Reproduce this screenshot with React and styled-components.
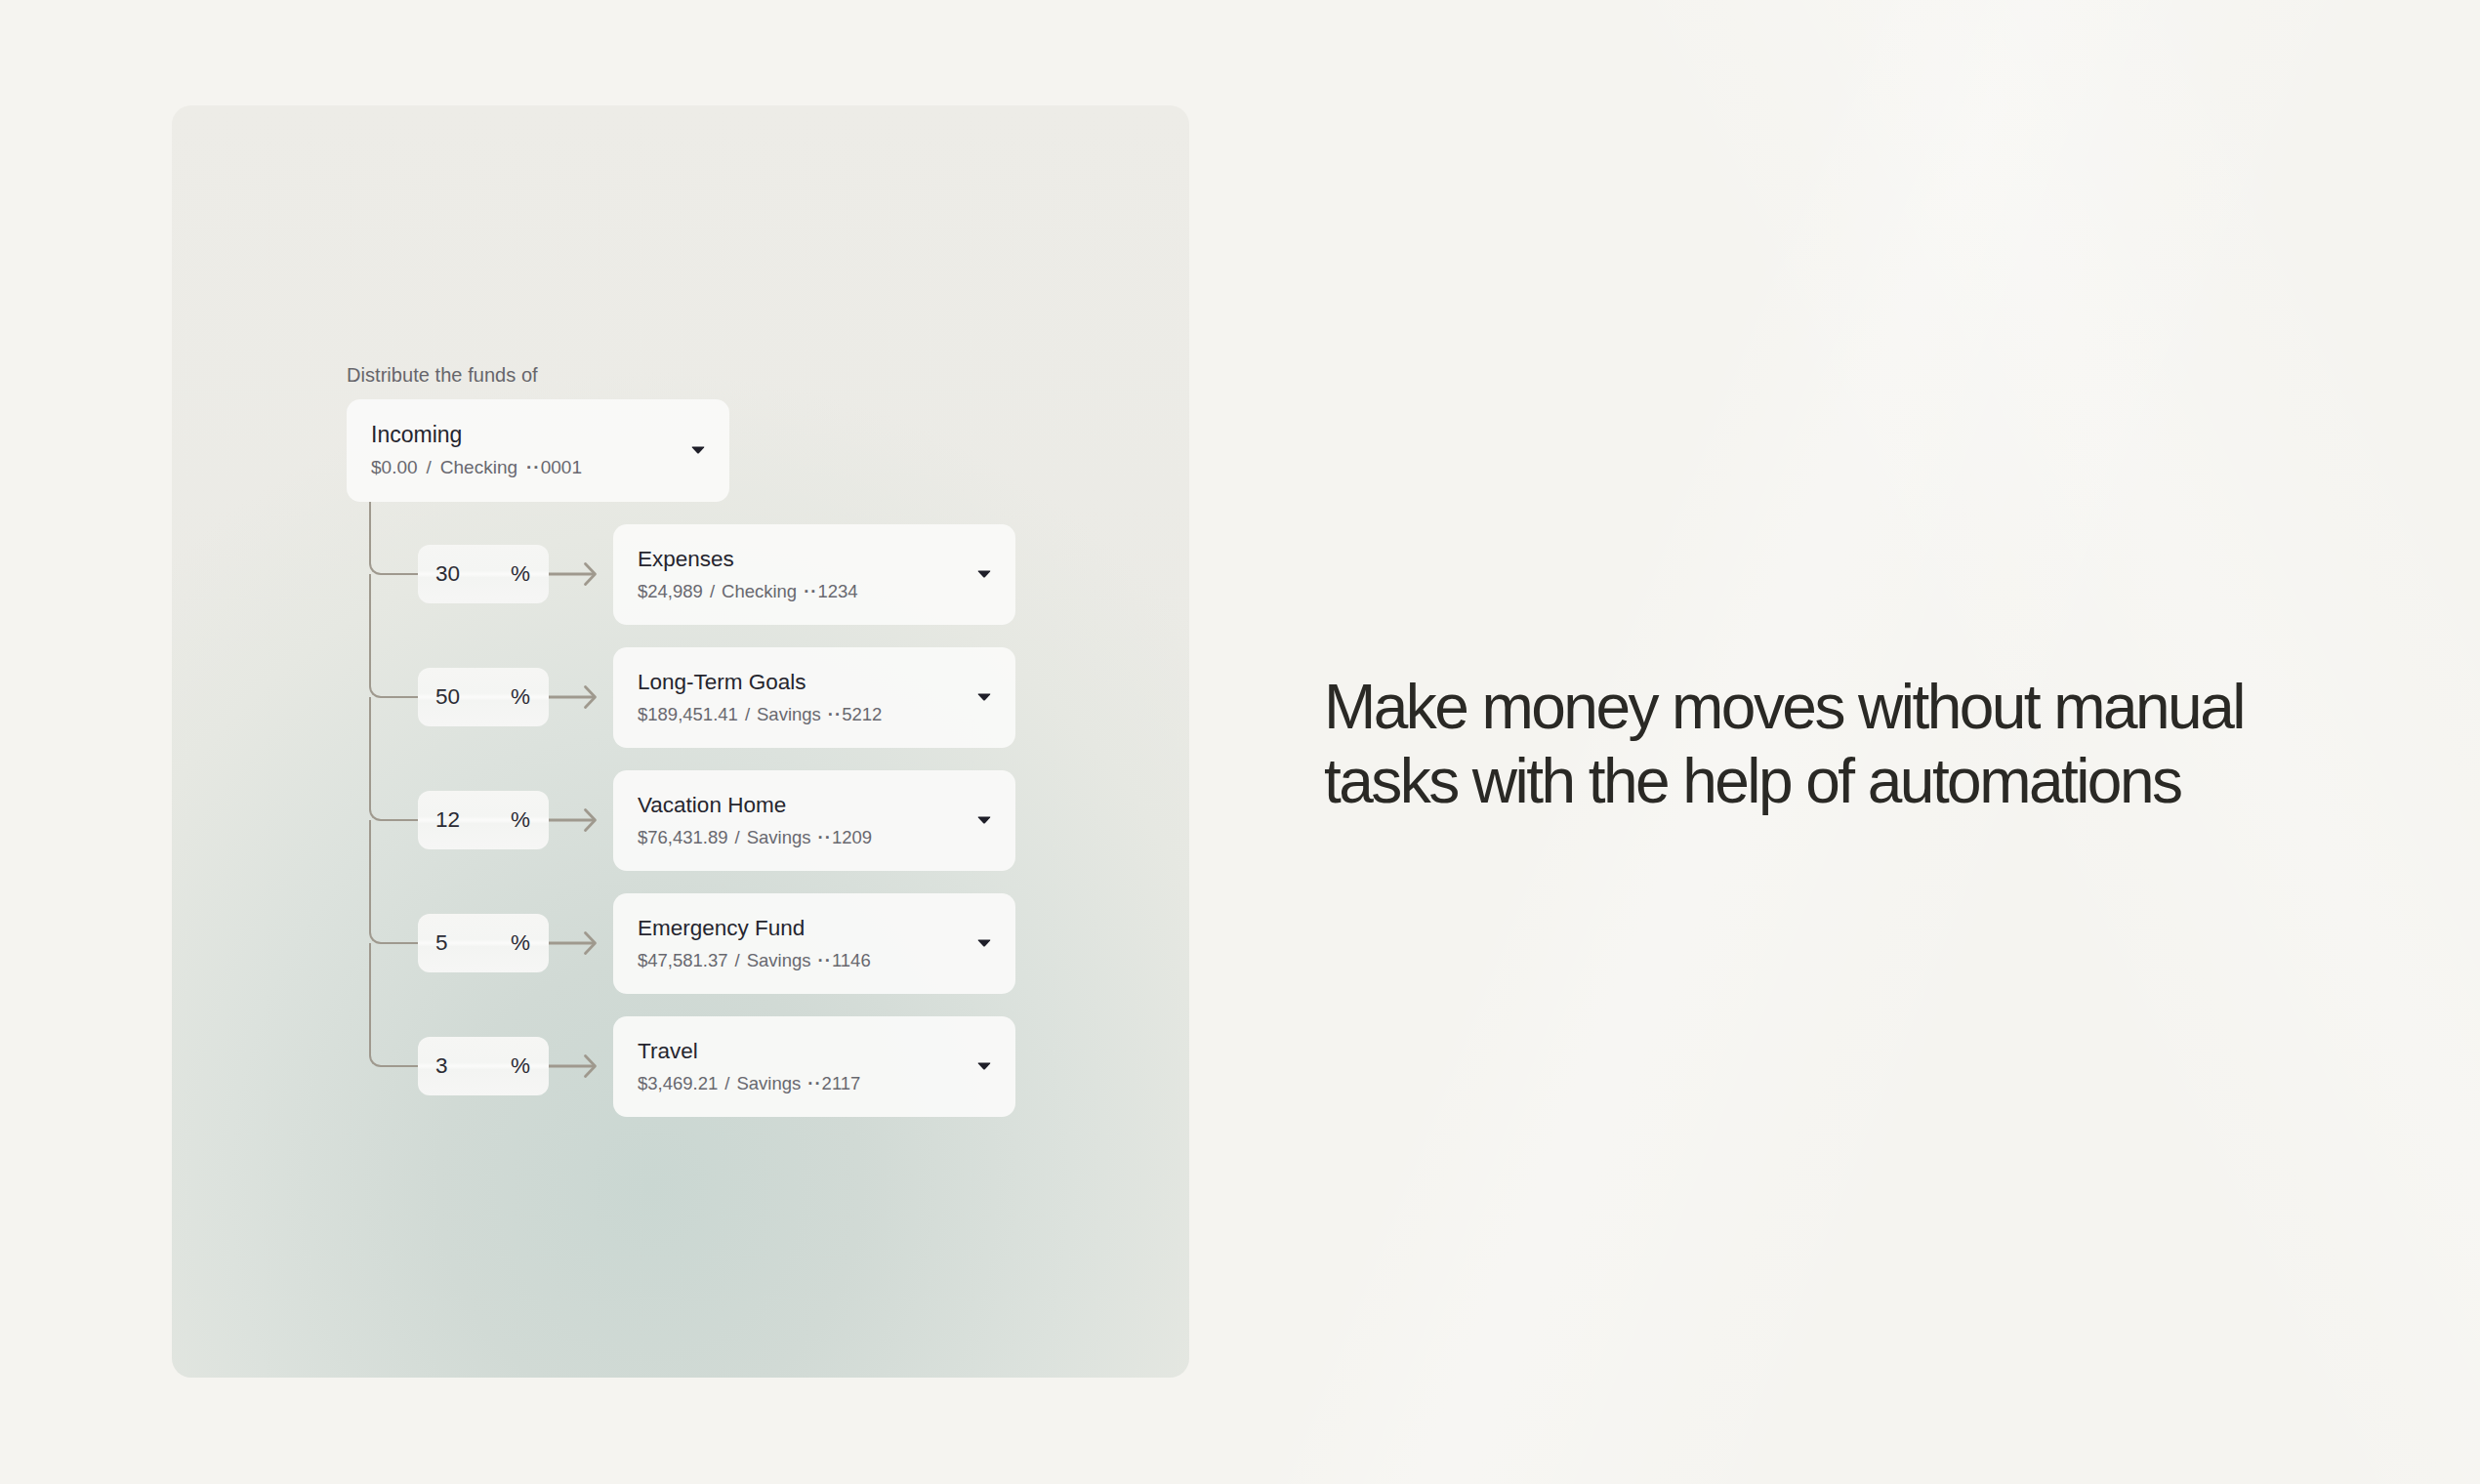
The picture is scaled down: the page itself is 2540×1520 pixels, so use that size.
import React from 'react'
import styled, { createGlobalStyle } from 'styled-components'

const GlobalStyle = createGlobalStyle`
  html, body {
    margin: 0;
    padding: 0;
    background: #f5f4f0;
  }
  body {
    font-family: "Liberation Sans", Arial, sans-serif;
    -webkit-font-smoothing: antialiased;
  }
`

const LINE = '#9f998e'

const rows = [
  { pct: '30', name: 'Expenses', amount: '$24,989', kind: 'Checking', last4: '1234' },
  { pct: '50', name: 'Long-Term Goals', amount: '$189,451.41', kind: 'Savings', last4: '5212' },
  { pct: '12', name: 'Vacation Home', amount: '$76,431.89', kind: 'Savings', last4: '1209' },
  { pct: '5', name: 'Emergency Fund', amount: '$47,581.37', kind: 'Savings', last4: '1146' },
  { pct: '3', name: 'Travel', amount: '$3,469.21', kind: 'Savings', last4: '2117' },
]

const Caret = () => (
  <svg width="14" height="8" viewBox="0 0 14 8">
    <path d="M1.2 0.6 H12.8 Q13.8 0.6 13.1 1.4 L7.8 7.2 Q7 8 6.2 7.2 L0.9 1.4 Q0.2 0.6 1.2 0.6 Z" fill="#1f1f29" />
  </svg>
)

const Arrow = () => (
  <ArrowSvg width="50" height="26" viewBox="0 0 50 26">
    <path d="M0 13 H47" stroke={LINE} strokeWidth="2.8" fill="none" />
    <path d="M37.5 2.5 L47.5 13 L37.5 23.5" stroke={LINE} strokeWidth="2.8" fill="none" strokeLinecap="round" strokeLinejoin="round" />
  </ArrowSvg>
)

const AccountSelect = ({ name, amount, kind, last4, wide }) => (
  <Select $wide={wide}>
    <SelectText>
      <SelectTitle $wide={wide}>{name}</SelectTitle>
      <SelectSub $wide={wide}>
        <span>{amount}</span>
        <span>/</span>
        <span>{kind}</span>
        <Last4><Dots>··</Dots>{last4}</Last4>
      </SelectSub>
    </SelectText>
    <Caret />
  </Select>
)

const App = () => {
  return (
    <>
      <GlobalStyle />
      <Page>
        <Card>
          <Flow>
            <Label>Distribute the funds of</Label>
            <AccountSelect wide name="Incoming" amount="$0.00" kind="Checking" last4="0001" />
            <Tree>
              {rows.map((r) => (
                <Row key={r.name}>
                  <Percent>
                    <span>{r.pct}</span>
                    <span>%</span>
                  </Percent>
                  <Arrow />
                  <AccountSelect name={r.name} amount={r.amount} kind={r.kind} last4={r.last4} />
                </Row>
              ))}
            </Tree>
          </Flow>
        </Card>
        <Headline>
          Make money moves without manual
          <br />
          tasks with the help of automations
        </Headline>
      </Page>
    </>
  )
}

const Page = styled.div`
  width: 2540px;
  height: 1520px;
  box-sizing: border-box;
  padding: 108px 0 109px 176px;
  display: flex;
  align-items: center;
  background:
    linear-gradient(112deg, rgba(255,255,255,0) 60%, rgba(255,255,255,0.22) 66%, rgba(255,255,255,0) 78%),
    linear-gradient(64deg, rgba(255,255,255,0) 72%, rgba(255,255,255,0.2) 82%, rgba(255,255,255,0) 92%),
    #f5f4f0;
`

const Card = styled.div`
  width: 1042px;
  height: 1303px;
  flex-shrink: 0;
  box-sizing: border-box;
  border-radius: 20px;
  padding-left: 179px;
  display: flex;
  flex-direction: column;
  justify-content: center;
  background:
    radial-gradient(ellipse 74% 64% at 47% 85%, #cad7d2 0%, #d1dad5 28%, #dce2dd 56%, #e6e8e2 80%, rgba(236,235,230,0) 100%),
    linear-gradient(180deg, #edece7 0%, #eaeae5 60%, #ebebe6 100%);
`

const Flow = styled.div`
  display: flex;
  flex-direction: column;
  margin-top: -4px;
`

const Label = styled.div`
  font-size: 20px;
  line-height: 24px;
  color: #66656a;
  margin-bottom: 13px;
  letter-spacing: 0.05px;
`

const Select = styled.div`
  width: ${(p) => (p.$wide ? '392px' : '412px')};
  height: ${(p) => (p.$wide ? '105px' : '103px')};
  box-sizing: border-box;
  padding: 0 25px;
  border-radius: 14px;
  background: rgba(250, 250, 249, 0.93);
  display: flex;
  align-items: center;
  justify-content: space-between;
  flex-shrink: 0;
`

const SelectText = styled.div`
  display: flex;
  flex-direction: column;
  gap: 8px;
`

const SelectTitle = styled.div`
  font-size: ${(p) => (p.$wide ? '23px' : '22.5px')};
  line-height: 27px;
  color: #25252e;
`

const SelectSub = styled.div`
  display: flex;
  align-items: baseline;
  gap: ${(p) => (p.$wide ? '9px' : '7px')};
  font-size: ${(p) => (p.$wide ? '19px' : '18.5px')};
  line-height: 23px;
  color: #68686f;
`

const Last4 = styled.span`
  display: inline-flex;
  align-items: baseline;
`

const Dots = styled.span`
  letter-spacing: 1px;
  font-weight: 700;
`

const Tree = styled.div`
  display: flex;
  flex-direction: column;
  gap: 23px;
  padding-top: 23px;
  padding-left: 73px;
`

const Row = styled.div`
  position: relative;
  display: flex;
  align-items: center;
  height: 103px;

  &::before {
    content: '';
    position: absolute;
    left: -50px;
    top: -75px;
    width: 48px;
    height: 125px;
    border-left: 2.8px solid ${LINE};
    border-bottom: 2.8px solid ${LINE};
    border-bottom-left-radius: 12px;
  }

  &:first-child::before {
    top: -23px;
    height: 73px;
  }
`

const Percent = styled.div`
  width: 134px;
  height: 60px;
  box-sizing: border-box;
  padding: 0 19px 0 18px;
  border-radius: 12px;
  display: flex;
  align-items: center;
  justify-content: space-between;
  font-size: 22.5px;
  color: #2b2b34;
  background: linear-gradient(180deg, #f6f6f4 0%, #f4f5f3 44%, #fbfbfa 50%, #f3f4f2 56%, #f6f6f5 100%);
  position: relative;
  z-index: 1;
`

const ArrowSvg = styled.svg`
  display: block;
  margin: 0 16px 0 0;
  flex-shrink: 0;
`

const Headline = styled.h1`
  margin: 0 0 0 138px;
  font-weight: 400;
  font-size: 64px;
  line-height: 76px;
  letter-spacing: -2.55px;
  color: #2a2925;
  white-space: nowrap;
  transform: translateY(2px);
`

export default App
